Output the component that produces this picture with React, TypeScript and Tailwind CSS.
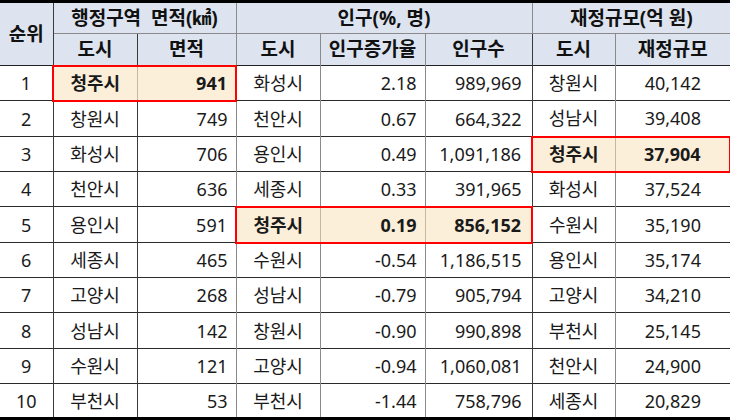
const rows = [
  { rank: 1, aCity: '청주시', area: '941', pCity: '화성시', rate: '2.18', pop: '989,969', fCity: '창원시', fin: '40,142' },
  { rank: 2, aCity: '창원시', area: '749', pCity: '천안시', rate: '0.67', pop: '664,322', fCity: '성남시', fin: '39,408' },
  { rank: 3, aCity: '화성시', area: '706', pCity: '용인시', rate: '0.49', pop: '1,091,186', fCity: '청주시', fin: '37,904' },
  { rank: 4, aCity: '천안시', area: '636', pCity: '세종시', rate: '0.33', pop: '391,965', fCity: '화성시', fin: '37,524' },
  { rank: 5, aCity: '용인시', area: '591', pCity: '청주시', rate: '0.19', pop: '856,152', fCity: '수원시', fin: '35,190' },
  { rank: 6, aCity: '세종시', area: '465', pCity: '수원시', rate: '-0.54', pop: '1,186,515', fCity: '용인시', fin: '35,174' },
  { rank: 7, aCity: '고양시', area: '268', pCity: '성남시', rate: '-0.79', pop: '905,794', fCity: '고양시', fin: '34,210' },
  { rank: 8, aCity: '성남시', area: '142', pCity: '창원시', rate: '-0.90', pop: '990,898', fCity: '부천시', fin: '25,145' },
  { rank: 9, aCity: '수원시', area: '121', pCity: '고양시', rate: '-0.94', pop: '1,060,081', fCity: '천안시', fin: '24,900' },
  { rank: 10, aCity: '부천시', area: '53', pCity: '부천시', rate: '-1.44', pop: '758,796', fCity: '세종시', fin: '20,829' },
];

const HI = 'bg-[#fcefd9] font-bold border-y-2 border-y-[#ff0000]';

export default function App() {
  return (
    <div className="w-[730px] h-[420px] bg-white overflow-hidden">
      <table
        className="w-[730px] table-fixed border-collapse text-[18px] leading-none text-[#1a1a1a] border-t-[3px] border-t-black border-b-[3px] border-b-black"
        style={{ fontFamily: '"Noto Sans", "Noto Sans CJK KR", sans-serif' }}
      >
        <colgroup>
          <col className="w-[53px]" />
          <col className="w-[84px]" />
          <col className="w-[99px]" />
          <col className="w-[84px]" />
          <col className="w-[105px]" />
          <col className="w-[107px]" />
          <col className="w-[83px]" />
          <col className="w-[115px]" />
        </colgroup>
        <thead className="bg-[#dde4f0] font-bold text-[19px] text-[#111]">
          <tr className="h-[32px]">
            <th rowSpan={2} className="border-r border-r-[#3a3a3a] border-b border-b-[#222] p-0">순위</th>
            <th colSpan={2} className="border-r border-r-[#8a8a8a] border-b border-b-[#8a8a8a] p-0 whitespace-pre">행정구역  면적(㎢)</th>
            <th colSpan={3} className="border-r border-r-[#8a8a8a] border-b border-b-[#8a8a8a] p-0">인구(%, 명)</th>
            <th colSpan={2} className="border-b border-b-[#8a8a8a] p-0">재정규모(억 원)</th>
          </tr>
          <tr className="h-[32px] border-b border-b-[#222]">
            <th className="border-r border-r-[#3a3a3a] p-0">도시</th>
            <th className="border-r border-r-[#8a8a8a] p-0">면적</th>
            <th className="border-r border-r-[#8a8a8a] p-0">도시</th>
            <th className="border-r border-r-[#8a8a8a] p-0">인구증가율</th>
            <th className="border-r border-r-[#3a3a3a] p-0">인구수</th>
            <th className="border-r border-r-[#8a8a8a] p-0">도시</th>
            <th className="p-0">재정규모</th>
          </tr>
        </thead>
        <tbody>
          {rows.map((r, i) => {
            const h = i % 3 === 1 ? 'h-[36px]' : 'h-[35px]';
            const a = r.rank === 1;
            const p = r.rank === 5;
            const f = r.rank === 3;
            return (
              <tr key={r.rank} className={`${h} border-b border-b-[#2a2a2a]`}>
                <td className="text-center border-r border-r-[#3a3a3a] p-0">{r.rank}</td>
                <td className={`text-center border-r p-0 ${a ? HI + ' border-l-2 border-l-[#ff0000] border-r-[#c9b8a0]' : 'border-r-[#3a3a3a]'}`}>{r.aCity}</td>
                <td className={`text-right border-r p-0 pr-2 ${a ? HI + ' border-r-2 border-r-[#ff0000]' : 'border-r-[#8a8a8a]'}`}>{r.area}</td>
                <td className={`text-center border-r p-0 ${p ? HI + ' border-l-2 border-l-[#ff0000] border-r-[#c9b8a0]' : 'border-r-[#8a8a8a]'}`}>{r.pCity}</td>
                <td className={`text-right border-r p-0 pr-2 ${p ? HI + ' border-r-[#c9b8a0]' : 'border-r-[#8a8a8a]'}`}>{r.rate}</td>
                <td className={`text-right border-r p-0 pr-2.5 ${p ? HI + ' border-r-2 border-r-[#ff0000]' : 'border-r-[#3a3a3a]'}`}>{r.pop}</td>
                <td className={`text-center border-r p-0 ${f ? HI + ' border-l-2 border-l-[#ff0000] border-r-[#c9b8a0]' : 'border-r-[#8a8a8a]'}`}>{r.fCity}</td>
                <td className={`text-center p-0 ${f ? HI + ' border-r-2 border-r-[#ff0000]' : ''}`}>{r.fin}</td>
              </tr>
            );
          })}
        </tbody>
      </table>
    </div>
  );
}
